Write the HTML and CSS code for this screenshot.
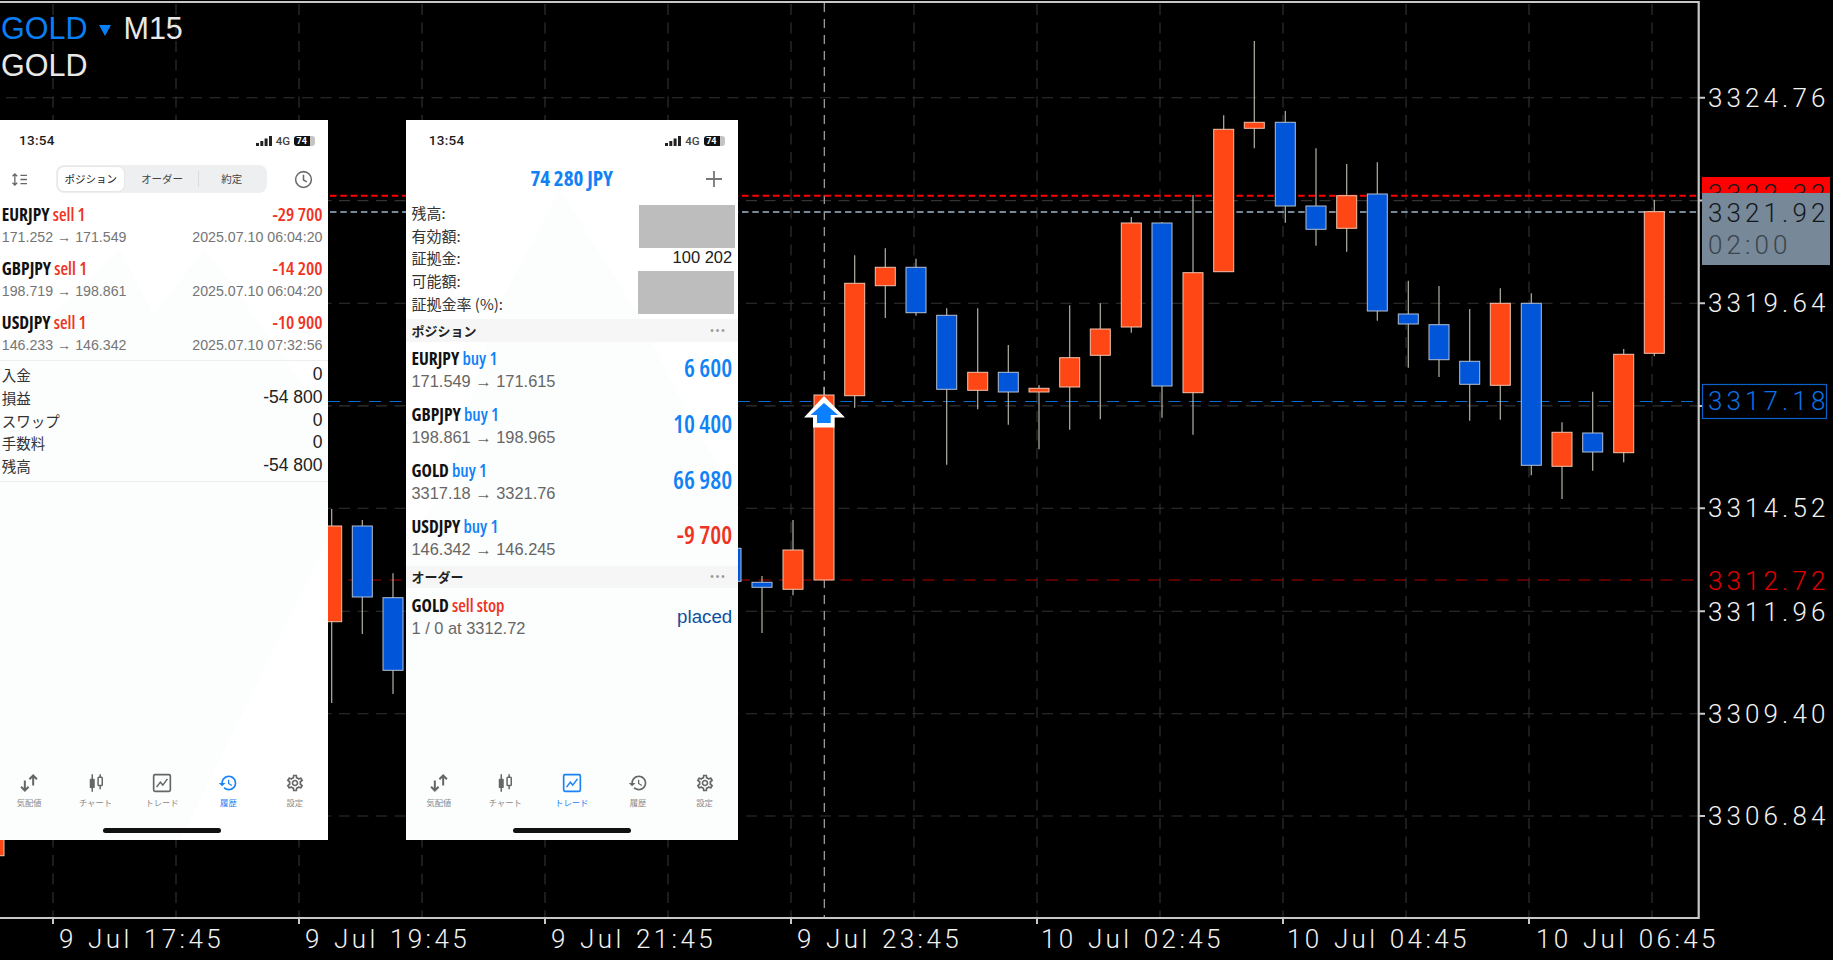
FILE: index.html
```html
<!DOCTYPE html>
<html lang="ja">
<head>
<meta charset="utf-8">
<title>GOLD M15</title>
<link rel="stylesheet" href="styles.css">
</head>
<body>
<main class="stage">
<svg class="chart" viewBox="0 0 1833 960" width="1833" height="960">
  <g class="grid">
    <path d="M6 97.8H1698M6 200.6H1698M6 303.3H1698M6 405.9H1698M6 508.3H1698M6 611.3H1698M6 713.7H1698M6 816H1698"/>
    <path d="M53 4V918M176 4V918M299 4V918M422 4V918M545 4V918M668 4V918M791 4V918M914 4V918M1037 4V918M1160 4V918M1283 4V918M1406 4V918M1529 4V918M1652 4V918"/>
  </g>
  <path class="cross" d="M824.3 3V918"/>
  <path class="line-red" d="M330 195.7H1698"/>
  <path class="line-gray" d="M330 212H1698"/>
  <path class="line-blue" d="M0 401.5H1698"/>
  <path class="line-order" d="M0 580H1698"/>

  <g class="bull">
    <path class="wick" d="M331.7 509V703M793 520V595.3M824 386.7V580M854.7 255.3V407.7M885.3 248.3V318M977.7 308.3V409.3M1039 385V449.3M1069.7 305.3V429.7M1100.3 303.3V419.3M1131.3 217V332.7M1193 195V434.7M1223.7 115.3V271.7M1254.3 41V148.3M1346.7 164V251.7M1500.3 288.3V419.7M1562 422.3V499M1623.7 349V462.3M1654.3 199.7V356.3"/>
    <rect x="-16" y="830" width="20" height="25.7"/>
    <rect x="321.7" y="526" width="20" height="95.7"/>
    <rect x="783" y="550" width="20" height="39.3"/>
    <rect x="814" y="395" width="20" height="185"/>
    <rect x="844.7" y="283.3" width="20" height="112.4"/>
    <rect x="875.3" y="267.3" width="20" height="18.4"/>
    <rect x="967.7" y="372.3" width="20" height="18"/>
    <rect x="1029" y="388.3" width="20" height="3.7"/>
    <rect x="1059.7" y="357.7" width="20" height="29.3"/>
    <rect x="1090.3" y="329" width="20" height="26.3"/>
    <rect x="1121.3" y="223" width="20" height="104"/>
    <rect x="1183" y="272.7" width="20" height="120"/>
    <rect x="1213.7" y="129.3" width="20" height="142.4"/>
    <rect x="1244.3" y="122.3" width="20" height="6"/>
    <rect x="1336.7" y="195.7" width="20" height="32.6"/>
    <rect x="1490.3" y="303.3" width="20" height="82"/>
    <rect x="1552" y="432.3" width="20" height="34"/>
    <rect x="1613.7" y="354.3" width="20" height="98.4"/>
    <rect x="1644.3" y="211.7" width="20" height="141.6"/>
  </g>
  <g class="bear">
    <path class="wick" d="M362.3 520V634M393 573.3V694M762 576V633M916 258.7V315.7M946.7 308.3V464.7M1008.3 345V424.7M1162 222V417.7M1285.3 111V222.7M1316 148.3V245.7M1377.3 162.3V320.7M1408.3 280.7V367.7M1439 286V377M1469.7 309V420.7M1531.3 293.3V475.3M1592.7 391.7V470.7"/>
    <rect x="352.3" y="526" width="20" height="71"/>
    <rect x="383" y="597.7" width="20" height="72.6"/>
    <rect x="721" y="548.3" width="20" height="33"/>
    <rect x="752" y="582.3" width="20" height="5"/>
    <rect x="906" y="267.3" width="20" height="45.4"/>
    <rect x="936.7" y="315.3" width="20" height="74"/>
    <rect x="998.3" y="372.3" width="20" height="19.7"/>
    <rect x="1152" y="223" width="20" height="163"/>
    <rect x="1275.3" y="122.3" width="20" height="83.7"/>
    <rect x="1306" y="206" width="20" height="23.3"/>
    <rect x="1367.3" y="194" width="20" height="117"/>
    <rect x="1398.3" y="314" width="20" height="10"/>
    <rect x="1429" y="324.7" width="20" height="35"/>
    <rect x="1459.7" y="361.3" width="20" height="23"/>
    <rect x="1521.3" y="303.3" width="20" height="162"/>
    <rect x="1582.7" y="433" width="20" height="19"/>
  </g>

  <polygon class="arrow-out" points="824,396 845,417.5 834.5,417.5 834.5,427.5 813,427.5 813,417.5 804,417.5"/>
  <polygon class="arrow-in" points="824,403 838,415 830.7,415 830.7,423 817,423 817,415 810.7,415"/>

  <path class="frame" d="M0 2H1698.7V918H0"/>
  <path class="tick" d="M53 918V924M299 918V924M545 918V924M791 918V924M1037 918V924M1283 918V924M1529 918V924M1699 97.8H1705M1699 200.6H1705M1699 303.3H1705M1699 405.9H1705M1699 508.3H1705M1699 611.3H1705M1699 713.7H1705M1699 816H1705"/>

  <text class="title title-blue" x="1" y="38.5">GOLD</text>
  <polygon class="title-tri" points="99,25 111,25 105,36"/>
  <text class="title" x="123.5" y="38.5">M15</text>
  <text class="title" x="1" y="76">GOLD</text>

  <rect class="tag-red" x="1702" y="177" width="128" height="18"/>
  <text class="axis axis-dark" x="1708" y="203">3322.32</text>
  <rect class="tag-gray" x="1702" y="193" width="128" height="72"/>
  <text class="axis axis-dark" x="1708" y="221.7">3321.92</text>
  <text class="axis axis-faint" x="1708" y="254">02:00</text>
  <rect class="tag-blue" x="1702.5" y="384.5" width="124" height="34"/>
  <text class="axis axis-blue" x="1708" y="410">3317.18</text>

  <text class="axis" x="1708" y="106.7">3324.76</text>
  <text class="axis" x="1708" y="312">3319.64</text>
  <text class="axis" x="1708" y="517">3314.52</text>
  <text class="axis axis-red" x="1708" y="590">3312.72</text>
  <text class="axis" x="1708" y="620.7">3311.96</text>
  <text class="axis" x="1708" y="722.7">3309.40</text>
  <text class="axis" x="1708" y="825.3">3306.84</text>

  <text class="axis axis-time" x="59" y="948">9 Jul 17:45</text>
  <text class="axis axis-time" x="305" y="948">9 Jul 19:45</text>
  <text class="axis axis-time" x="551" y="948">9 Jul 21:45</text>
  <text class="axis axis-time" x="797" y="948">9 Jul 23:45</text>
  <text class="axis axis-time" x="1041" y="948">10 Jul 02:45</text>
  <text class="axis axis-time" x="1287" y="948">10 Jul 04:45</text>
  <text class="axis axis-time" x="1536" y="948">10 Jul 06:45</text>
</svg>

<section class="phone phone-history">
  <svg class="watermark" viewBox="0 0 332 720"><polygon points="0,230 60,190 124,130 158,195 209,128 332,300 332,420 184,720 0,720"/></svg>
  <div class="status">
    <span class="clock-time">13:54</span>
    <div class="status-right">
      <svg class="signal" viewBox="0 0 16 10"><path d="M0 7h3v3H0zM4.300 5h3v5h-3zM8.600 2.500h3V10h-3zM13 0h3v10h-3z"/></svg>
      <span class="net">4G</span>
      <span class="battery"><span class="battery-num">74</span></span>
    </div>
  </div>
  <div class="toolbar">
    <svg class="sort-icon" viewBox="0 0 18 14"><path d="M4 1v12M1.500 3.500L4 1l2.500 2.500M1.500 10.500L4 13l2.500-2.500M10 2.500h7M10 7h7M10 11.500h7"/></svg>
    <div class="segments">
      <span class="segment segment-on">ポジション</span>
      <span class="segment segment-mid">オーダー</span>
      <span class="segment segment-split">約定</span>
    </div>
    <svg class="clock-icon" viewBox="0 0 20 20"><circle cx="10" cy="10" r="8.300"/><path d="M10 5v5.500l3.500 2"/></svg>
  </div>
  <div class="deals">
    <div class="deal">
      <div class="line"><span class="sym">EURJPY <em class="neg">sell 1</em></span><span class="amount neg">-29 700</span></div>
      <div class="line sub"><span>171.252 → 171.549</span><span>2025.07.10 06:04:20</span></div>
    </div>
    <div class="deal">
      <div class="line"><span class="sym">GBPJPY <em class="neg">sell 1</em></span><span class="amount neg">-14 200</span></div>
      <div class="line sub"><span>198.719 → 198.861</span><span>2025.07.10 06:04:20</span></div>
    </div>
    <div class="deal">
      <div class="line"><span class="sym">USDJPY <em class="neg">sell 1</em></span><span class="amount neg">-10 900</span></div>
      <div class="line sub"><span>146.233 → 146.342</span><span>2025.07.10 07:32:56</span></div>
    </div>
  </div>
  <div class="summary">
    <div class="kv"><span>入金</span><span class="num">0</span></div>
    <div class="kv"><span>損益</span><span class="num">-54 800</span></div>
    <div class="kv"><span>スワップ</span><span class="num">0</span></div>
    <div class="kv"><span>手数料</span><span class="num">0</span></div>
    <div class="kv"><span>残高</span><span class="num">-54 800</span></div>
  </div>
  <nav class="tabs">
    <div class="tab"><svg class="ico" viewBox="0 0 24 24"><path class="s" d="M7 9v12M2.500 16.500L7 21l4.500-4.500M17 15V3M12.500 7.500L17 3l4.500 4.500"/></svg><span>気配値</span></div>
    <div class="tab"><svg class="ico" viewBox="0 0 24 24"><path class="s1" d="M7.500 1.500v21M17 1.500v18"/><rect class="f" x="4.500" y="7" width="6" height="11" rx="1"/><rect class="o" x="14.500" y="5" width="5" height="10" rx="1"/></svg><span>チャート</span></div>
    <div class="tab"><svg class="ico" viewBox="0 0 24 24"><rect class="o2" x="2" y="2" width="20" height="20" rx="1.500"/><path class="s1" d="M5.500 17L10 11l3 3.500L18.500 7"/></svg><span>トレード</span></div>
    <div class="tab tab-on"><svg class="ico" viewBox="0 0 24 24"><path class="f" d="M13 3c-4.970 0-9 4.030-9 9H1l3.890 3.890.07.14L9 12H6c0-3.870 3.130-7 7-7s7 3.130 7 7-3.130 7-7 7c-1.930 0-3.680-.79-4.940-2.060l-1.420 1.420C8.270 19.990 10.510 21 13 21c4.970 0 9-4.030 9-9s-4.030-9-9-9zm-1 5v5l4.280 2.540.72-1.210-3.500-2.080V8H12z"/></svg><span>履歴</span></div>
    <div class="tab"><svg class="ico" viewBox="0 0 24 24"><path class="f" d="M19.430 12.980c.04-.32.07-.64.07-.98 0-.34-.03-.66-.07-.98l2.110-1.650c.19-.15.24-.42.12-.64l-2-3.460c-.09-.16-.26-.25-.44-.25-.06 0-.12.01-.17.03l-2.490 1c-.52-.4-1.080-.73-1.690-.98l-.38-2.650C14.460 2.180 14.250 2 14 2h-4c-.25 0-.46.18-.49.42l-.38 2.650c-.61.25-1.170.59-1.690.98l-2.490-1c-.06-.02-.12-.03-.18-.03-.17 0-.34.09-.43.25l-2 3.460c-.13.22-.07.49.12.64l2.110 1.650c-.04.32-.07.65-.07.98 0 .33.03.66.07.98l-2.110 1.650c-.19.15-.24.42-.12.64l2 3.460c.09.16.26.25.44.25.06 0 .12-.01.17-.03l2.490-1c.52.4 1.080.73 1.690.98l.38 2.650c.03.24.24.42.49.42h4c.25 0 .46-.18.49-.42l.38-2.650c.61-.25 1.170-.59 1.690-.98l2.490 1c.06.02.12.03.18.03.17 0 .34-.09.43-.25l2-3.460c.12-.22.07-.49-.12-.64l-2.110-1.650zM17.450 11.270c.04.31.05.52.05.73 0 .21-.02.43-.05.73l-.14 1.130.89.7 1.080.84-.7 1.210-1.270-.51-1.040-.42-.9.68c-.43.32-.84.56-1.250.73l-1.060.43-.16 1.130-.2 1.350h-1.400l-.19-1.350-.16-1.130-1.060-.43c-.43-.18-.83-.41-1.230-.71l-.91-.7-1.060.43-1.270.51-.7-1.210 1.080-.84.89-.7-.14-1.130c-.03-.31-.05-.54-.05-.74s.02-.43.05-.73l.14-1.130-.89-.7-1.080-.84.7-1.210 1.270.51 1.040.42.9-.68c.43-.32.84-.56 1.250-.73l1.060-.43.16-1.130.2-1.350h1.390l.19 1.350.16 1.130 1.060.43c.43.18.83.41 1.230.71l.91.7 1.060-.43 1.270-.51.7 1.210-1.070.85-.89.7.14 1.130zM12 8c-2.210 0-4 1.790-4 4s1.790 4 4 4 4-1.790 4-4-1.790-4-4-4zm0 6c-1.100 0-2-.9-2-2s.9-2 2-2 2 .9 2 2-.9 2-2 2z"/></svg><span>設定</span></div>
  </nav>
  <div class="home-bar"></div>
</section>

<section class="phone phone-trade">
  <svg class="watermark" viewBox="0 0 332 720"><polygon points="154,70 230,190 280,290 332,380 332,720 0,720 0,420 40,370 90,190"/></svg>
  <div class="status">
    <span class="clock-time">13:54</span>
    <div class="status-right">
      <svg class="signal" viewBox="0 0 16 10"><path d="M0 7h3v3H0zM4.300 5h3v5h-3zM8.600 2.500h3V10h-3zM13 0h3v10h-3z"/></svg>
      <span class="net">4G</span>
      <span class="battery"><span class="battery-num">74</span></span>
    </div>
  </div>
  <header class="balance-bar">
    <span class="balance">74 280 JPY</span>
    <svg class="plus-icon" viewBox="0 0 16 16"><path d="M8 0v16M0 8h16"/></svg>
  </header>
  <div class="account">
    <div class="kv"><span>残高:</span></div>
    <div class="kv"><span>有効額:</span></div>
    <div class="kv"><span>証拠金:</span><span class="num">100 202</span></div>
    <div class="kv"><span>可能額:</span></div>
    <div class="kv"><span>証拠金率 (%):</span></div>
  </div>
  <div class="mask mask-top"></div>
  <div class="mask mask-bottom"></div>
  <h2 class="section"><span>ポジション</span><span class="dots">•••</span></h2>
  <div class="pos"><div class="pos-text"><div class="sym">EURJPY <em class="pos-c">buy 1</em></div><div class="price">171.549 → 171.615</div></div><span class="profit pos-c">6 600</span></div>
  <div class="pos"><div class="pos-text"><div class="sym">GBPJPY <em class="pos-c">buy 1</em></div><div class="price">198.861 → 198.965</div></div><span class="profit pos-c">10 400</span></div>
  <div class="pos"><div class="pos-text"><div class="sym">GOLD <em class="pos-c">buy 1</em></div><div class="price">3317.18 → 3321.76</div></div><span class="profit pos-c">66 980</span></div>
  <div class="pos"><div class="pos-text"><div class="sym">USDJPY <em class="pos-c">buy 1</em></div><div class="price">146.342 → 146.245</div></div><span class="profit neg">-9 700</span></div>
  <h2 class="section section-order"><span>オーダー</span><span class="dots">•••</span></h2>
  <div class="pos pos-order"><div class="pos-text"><div class="sym">GOLD <em class="neg">sell stop</em></div><div class="price">1 / 0 at 3312.72</div></div><span class="placed">placed</span></div>
  <nav class="tabs">
    <div class="tab"><svg class="ico" viewBox="0 0 24 24"><path class="s" d="M7 9v12M2.500 16.500L7 21l4.500-4.500M17 15V3M12.500 7.500L17 3l4.500 4.500"/></svg><span>気配値</span></div>
    <div class="tab"><svg class="ico" viewBox="0 0 24 24"><path class="s1" d="M7.500 1.500v21M17 1.500v18"/><rect class="f" x="4.500" y="7" width="6" height="11" rx="1"/><rect class="o" x="14.500" y="5" width="5" height="10" rx="1"/></svg><span>チャート</span></div>
    <div class="tab tab-on"><svg class="ico" viewBox="0 0 24 24"><rect class="o2" x="2" y="2" width="20" height="20" rx="1.500"/><path class="s1" d="M5.500 17L10 11l3 3.500L18.500 7"/></svg><span>トレード</span></div>
    <div class="tab"><svg class="ico" viewBox="0 0 24 24"><path class="f" d="M13 3c-4.970 0-9 4.030-9 9H1l3.890 3.890.07.14L9 12H6c0-3.870 3.130-7 7-7s7 3.130 7 7-3.130 7-7 7c-1.930 0-3.680-.79-4.940-2.060l-1.420 1.420C8.270 19.990 10.510 21 13 21c4.970 0 9-4.030 9-9s-4.030-9-9-9zm-1 5v5l4.280 2.540.72-1.210-3.500-2.080V8H12z"/></svg><span>履歴</span></div>
    <div class="tab"><svg class="ico" viewBox="0 0 24 24"><path class="f" d="M19.430 12.980c.04-.32.07-.64.07-.98 0-.34-.03-.66-.07-.98l2.110-1.650c.19-.15.24-.42.12-.64l-2-3.460c-.09-.16-.26-.25-.44-.25-.06 0-.12.01-.17.03l-2.490 1c-.52-.4-1.080-.73-1.690-.98l-.38-2.650C14.460 2.180 14.250 2 14 2h-4c-.25 0-.46.18-.49.42l-.38 2.650c-.61.25-1.170.59-1.690.98l-2.490-1c-.06-.02-.12-.03-.18-.03-.17 0-.34.09-.43.25l-2 3.460c-.13.22-.07.49.12.64l2.110 1.650c-.04.32-.07.65-.07.98 0 .33.03.66.07.98l-2.110 1.650c-.19.15-.24.42-.12.64l2 3.460c.09.16.26.25.44.25.06 0 .12-.01.17-.03l2.490-1c.52.4 1.080.73 1.690.98l.38 2.650c.03.24.24.42.49.42h4c.25 0 .46-.18.49-.42l.38-2.650c.61-.25 1.170-.59 1.690-.98l2.490 1c.06.02.12.03.18.03.17 0 .34-.09.43-.25l2-3.460c.12-.22.07-.49-.12-.64l-2.110-1.650zM17.450 11.270c.04.31.05.52.05.73 0 .21-.02.43-.05.73l-.14 1.130.89.7 1.080.84-.7 1.210-1.270-.51-1.040-.42-.9.68c-.43.32-.84.56-1.250.73l-1.060.43-.16 1.130-.2 1.350h-1.400l-.19-1.350-.16-1.130-1.060-.43c-.43-.18-.83-.41-1.230-.71l-.91-.7-1.060.43-1.270.51-.7-1.210 1.080-.84.89-.7-.14-1.130c-.03-.31-.05-.54-.05-.74s.02-.43.05-.73l.14-1.130-.89-.7-1.080-.84.7-1.210 1.270.51 1.040.42.9-.68c.43-.32.84-.56 1.250-.73l1.060-.43.16-1.130.2-1.350h1.390l.19 1.350.16 1.130 1.060.43c.43.18.83.41 1.230.71l.91.7 1.060-.43 1.270-.51.7 1.210-1.070.85-.89.7.14 1.130zM12 8c-2.210 0-4 1.790-4 4s1.790 4 4 4 4-1.790 4-4-1.790-4-4-4zm0 6c-1.100 0-2-.9-2-2s.9-2 2-2 2 .9 2 2-.9 2-2 2z"/></svg><span>設定</span></div>
  </nav>
  <div class="home-bar"></div>
</section>
</main>
</body>
</html>
```
FILE: styles.css
```css
* { box-sizing: border-box; }
html, body { margin: 0; padding: 0; background: #000; }
.stage { position: relative; width: 1833px; height: 960px; overflow: hidden; background: #000; font-family: "Liberation Sans", "Noto Sans CJK JP", sans-serif; }

/* chart canvas */
.chart { position: absolute; left: 0; top: 0; display: block; }
.grid path { fill: none; stroke: #333; stroke-width: 1.1; stroke-dasharray: 11 7.5; }
.cross { fill: none; stroke: #a8a8a8; stroke-width: 1.2; stroke-dasharray: 9 7; }
.line-red { fill: none; stroke: #f00; stroke-width: 2; stroke-dasharray: 6.5 3.8; }
.line-gray { fill: none; stroke: #778899; stroke-width: 2; stroke-dasharray: 6.5 3.8; }
.line-blue { fill: none; stroke: #0a6bd0; stroke-width: 1.2; stroke-dasharray: 12 8.5; }
.line-order { fill: none; stroke: #b00000; stroke-width: 1.2; stroke-dasharray: 12 8.5; }
.wick { fill: none; stroke: #b4b2a4; stroke-width: 1.2; }
.bull rect { fill: #ff4716; stroke: #f0c4ac; stroke-width: 1; }
.bear rect { fill: #0055d8; stroke: #b4c0d4; stroke-width: 1; }
.arrow-out { fill: #fff; }
.arrow-in { fill: #0a7fff; }
.frame { fill: none; stroke: #c8c8c8; stroke-width: 2.2; }
.tick { fill: none; stroke: #c8c8c8; stroke-width: 2; }
.title { font-family: "Liberation Sans", sans-serif; font-size: 30.5px; fill: #e8e8e8; }
.title-blue { fill: #0a7ef4; }
.title-tri { fill: #0a7ef4; }
.axis { font-family: Roboto, "Liberation Sans", sans-serif; font-weight: 300; font-size: 26px; letter-spacing: 4.1px; fill: #f2f2f2; }
.axis-time { letter-spacing: 3.4px; word-spacing: 1.5px; }
.axis-dark { fill: #14181d; }
.axis-faint { fill: #3c444c; }
.axis-blue { fill: #0a72e8; }
.axis-red { fill: #e00000; }
.tag-red { fill: #f00; }
.tag-gray { fill: #778899; }
.tag-blue { fill: #000; stroke: #0a62c8; stroke-width: 1.2; }

/* phone screenshots placed on the chart */
.phone { position: absolute; top: 120px; z-index: 1; width: 332px; height: 720px; display: flex; flex-direction: column; background: #fff; color: #111; overflow: hidden; }
.phone-history { left: -4px; }
.phone-trade { left: 405.7px; }
.watermark { position: absolute; left: 0; top: 0; width: 332px; height: 720px; z-index: -1; }
.watermark polygon { fill: #fcfdfd; }

.status { flex: none; height: 41px; padding: 0 13px 0 23px; display: flex; align-items: center; justify-content: space-between; }
.clock-time { font-family: Roboto, sans-serif; font-weight: 500; font-size: 13.5px; letter-spacing: .3px; color: #1c1c1c; margin-top: -2px; }
.status-right { display: flex; align-items: center; gap: 4px; }
.signal { width: 16px; height: 10px; fill: #222; }
.net { font-family: Roboto, sans-serif; font-weight: 500; font-size: 11.5px; color: #444; }
.battery { width: 21px; height: 10px; border-radius: 3px; background: linear-gradient(90deg, #111 74%, #c4c4c4 74%); display: flex; align-items: center; padding-left: 2.500px; }
.battery-num { font-family: Roboto, sans-serif; font-weight: 700; font-size: 9px; line-height: 10px; color: #fff; }

.toolbar { flex: none; height: 36px; display: flex; align-items: center; padding: 0 15px 0 15px; position: relative; }
.sort-icon { width: 17px; height: 13px; fill: none; stroke: #666; stroke-width: 1.4; flex: none; }
.segments { flex: none; margin-left: 27.700px; width: 211.300px; height: 27.700px; padding: 2px; background: #eeeff0; border-radius: 8px; display: flex; align-items: center; font-family: "Noto Sans CJK JP", sans-serif; font-size: 10.500px; color: #444; }
.segment { flex: 1; text-align: center; height: 24px; line-height: 24px; }
.segment-on { flex: none; width: 66.300px; background: #fff; border-radius: 6px; color: #222; box-shadow: 0 0 2px rgba(0,0,0,.12); }
.segment-mid { flex: none; width: 73.600px; padding-left: 2.700px; }
.segment-split { border-left: 1px solid #dcdcdc; height: 16px; line-height: 16px; }
.clock-icon { margin-left: auto; width: 19px; height: 19px; fill: none; stroke: #6a6a6a; stroke-width: 1.6; flex: none; }

.sym { font-family: "Liberation Sans Narrow", "Open Sans", "Noto Sans CJK JP", sans-serif; font-stretch: 75%; font-weight: 700; font-size: 17.500px; line-height: 22px; color: #111; white-space: nowrap; }
.sym em { font-style: normal; font-weight: 600; }
.neg { color: #f03222; }
.pos-c { color: #1182f6; }

.deals { flex: none; }
.deal { height: 54px; padding: 6px 5.500px 2px 5.800px; }
.line { display: flex; justify-content: space-between; }
.amount { font-family: "Liberation Sans Narrow", "Open Sans", sans-serif; font-stretch: 75%; font-weight: 600; font-size: 18.500px; line-height: 22px; }
.sub { font-size: 14.200px; line-height: 24px; color: #757575; }

.summary { flex: none; margin-top: 1px; border-top: 1px solid #eee; border-bottom: 1px solid #eee; padding: 2.500px 5.500px 4px 5.800px; }
.kv { height: 22.700px; display: flex; justify-content: space-between; align-items: center; font-family: "Noto Sans CJK JP", sans-serif; font-size: 14.500px; color: #333; }
.num { font-family: "Liberation Sans", sans-serif; font-size: 16.500px; color: #222; }
.summary .num { font-size: 17.500px; }

.balance-bar { flex: none; height: 36px; padding-bottom: 3px; position: relative; display: flex; align-items: center; justify-content: center; }
.balance { font-family: "Liberation Sans Narrow", "Open Sans", sans-serif; font-stretch: 75%; font-weight: 700; font-size: 21px; color: #1182f6; }
.plus-icon { position: absolute; right: 16px; top: 10px; width: 16px; height: 16px; fill: none; stroke: #777; stroke-width: 1.8; }

.account { flex: none; height: 122px; padding: 4px 5.500px 4px 5.800px; }
.account .kv { font-size: 15px; }
.mask { position: absolute; background: #bdbdbd; }
.mask-top { left: 233.600px; top: 85px; width: 95.700px; height: 42.700px; }
.mask-bottom { left: 232px; top: 151px; width: 96.300px; height: 42.700px; }

.section { flex: none; margin: 0; height: 22.700px; padding: 0 11px 0 5.800px; background: #f6f6f6; display: flex; justify-content: space-between; align-items: center; font-family: "Noto Sans CJK JP", sans-serif; font-weight: 700; font-size: 13px; color: #222; }
.section-order { margin-top: 1.200px; }
.dots { font-family: "Liberation Sans", sans-serif; font-weight: 400; font-size: 10px; letter-spacing: 2px; color: #999; }

.pos { flex: none; height: 55.700px; padding: 5.500px 5.500px 3.700px 5.800px; display: flex; justify-content: space-between; align-items: center; }
.pos-order { padding-top: 4.500px; }
.price { font-size: 16.400px; line-height: 24px; color: #666; }
.profit { font-family: "Liberation Sans Narrow", "Open Sans", sans-serif; font-stretch: 75%; font-weight: 600; font-size: 24.500px; margin-bottom: 4px; line-height: 1; }
.placed { font-size: 18.700px; color: #0e4fa0; }

.tabs { flex: none; margin-top: auto; display: flex; height: 47px; }
.tab { flex: 1; display: flex; flex-direction: column; align-items: center; font-family: "Noto Sans CJK JP", sans-serif; font-size: 8.300px; line-height: 12px; color: #8a8a8a; }
.tab .ico { width: 20px; height: 20px; margin-bottom: 3px; }
.ico .s { fill: none; stroke: #666; stroke-width: 2.400; }
.ico .s1 { fill: none; stroke: #666; stroke-width: 1.800; }
.ico .f { fill: #666; }
.ico .o { fill: #fff; stroke: #666; stroke-width: 1.800; }
.ico .o2 { fill: none; stroke: #666; stroke-width: 2; }
.tab-on { color: #1a82f7; }
.tab-on .f { fill: #1a82f7; }
.tab-on .s, .tab-on .s1, .tab-on .o, .tab-on .o2 { stroke: #1a82f7; }

.home-bar { flex: none; align-self: center; margin-top: 8px; margin-bottom: 7px; width: 118.300px; height: 4.700px; border-radius: 3px; background: #111; }
```
